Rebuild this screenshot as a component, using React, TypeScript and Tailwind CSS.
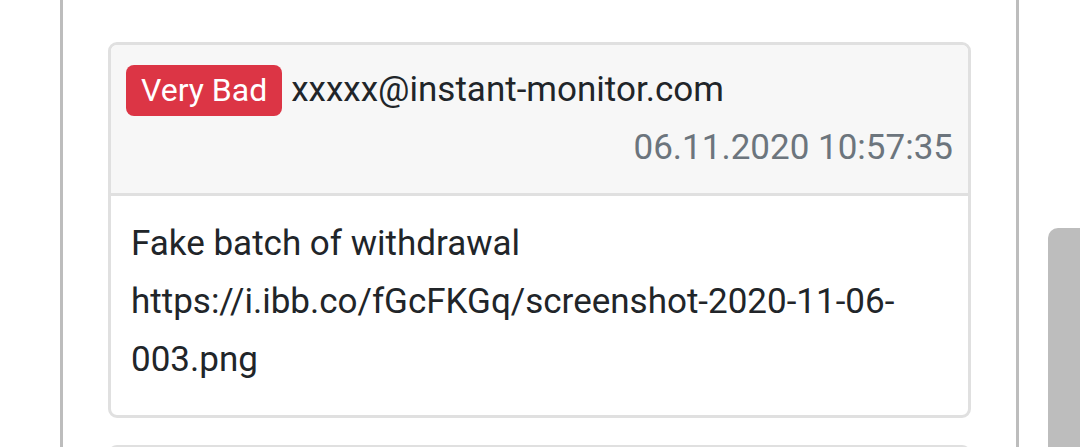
import React from 'react';

export default function App() {
  return (
    <div
      className="relative h-[447px] w-[1080px] overflow-hidden bg-white text-[#212529]"
      style={{ fontFamily: 'Roboto, "Liberation Sans", sans-serif' }}
    >
      <div className="ml-[60px] h-full w-[959px] border-x-[3px] border-[#bdbdbd] px-[45px] pt-[42px]">
        {/* Review card */}
        <div className="overflow-hidden rounded-[9px] border-[3px] border-[#e0e0e0]">
          <div className="border-b-[3px] border-[#e0e0e0] bg-[#f7f7f7] px-[15px] py-4 text-[35px] leading-[58px]">
            <div className="flex h-[58px] items-center">
              <span className="flex h-[51px] items-center rounded-[8px] bg-[#dc3545] px-[15px] text-[32px] text-white">
                Very Bad
              </span>
              <span className="ml-[9px]">xxxxx@instant-monitor.com</span>
            </div>
            <div className="text-right text-[#6c757d]">06.11.2020 10:57:35</div>
          </div>
          <div className="px-5 pb-[26px] pt-[19px] text-[35px] leading-[58px]">
            <div>Fake batch of withdrawal</div>
            <div>https://i.ibb.co/fGcFKGq/screenshot-2020-11-06-003.png</div>
          </div>
        </div>

        {/* Next card peeking in */}
        <div className="mt-[27px] h-[60px] rounded-[9px] border-[3px] border-[#e0e0e0] bg-[#f7f7f7]" />
      </div>

      {/* Overlay scrollbar */}
      <div className="absolute left-[1048px] top-[228px] h-[260px] w-[32px] rounded-l-[10px] bg-[#bdbdbd]" />
    </div>
  );
}
